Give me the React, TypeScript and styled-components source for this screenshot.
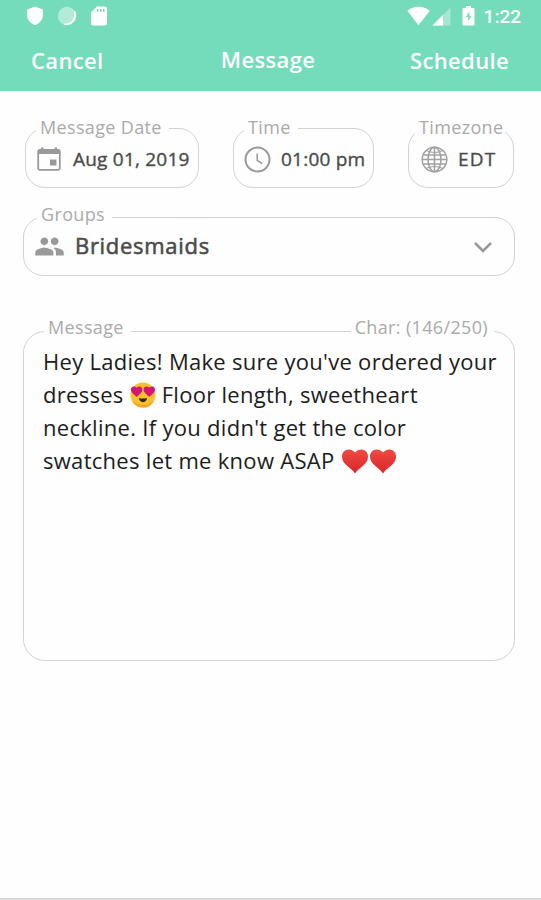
import * as React from 'react';
import styled, { createGlobalStyle } from 'styled-components';
import { MdPeople } from 'react-icons/md';

const GlobalStyle = createGlobalStyle`
  * {
    box-sizing: border-box;
  }
  body {
    margin: 0;
    background: #fefefe;
  }
`;

const StyledScreen = styled.div`
  display: flex;
  flex-direction: column;
  width: 541px;
  height: 900px;
  overflow: hidden;
  background: #fefefe;
  font-family: 'Open Sans', 'Noto Sans', sans-serif;
`;

const StyledHeader = styled.header`
  height: 91px;
  background: #74dcba;
  color: #ffffff;
`;

const StyledStatusBar = styled.div`
  display: flex;
  align-items: center;
  justify-content: space-between;
  height: 33px;
  padding: 0 20px 0 26px;
`;

const StyledStatusGroup = styled.div<{ $gap?: number }>`
  display: flex;
  align-items: center;
  gap: ${({ $gap }) => $gap || 0}px;
  height: 32px;
  margin-bottom: 1px;
`;

const StyledBattery = styled.span`
  display: flex;
  margin-left: 11px;
`;

const StyledClock = styled.span`
  margin-left: 9px;
  padding-top: 1px;
  font: 500 19px/33px Roboto, sans-serif;
`;

const StyledNavBar = styled.nav`
  display: grid;
  grid-template-columns: 1fr auto 1fr;
  padding: 0 32px 0 31px;
`;

const StyledNavItem = styled.span<{ $align?: string }>`
  font-size: 22px;
  font-weight: 600;
  line-height: 54px;
  letter-spacing: 0.35px;
  text-align: ${({ $align }) => $align || 'left'};
`;

const StyledNavTitle = styled(StyledNavItem)`
  margin-right: 4px;
  line-height: 52px;
`;

const StyledForm = styled.main`
  display: flex;
  flex-direction: column;
  flex-grow: 1;
  padding: 37px 26px 0 23px;
  border-bottom: 2px solid #d8d8d8;
`;

const StyledFieldRow = styled.div`
  display: flex;
  justify-content: space-between;
  margin: 0 1px 29px 2px;
`;

const StyledField = styled.section<{ $width?: number; $height?: number; $radius?: number }>`
  position: relative;
  display: flex;
  align-items: center;
  width: ${({ $width }) => ($width ? `${$width}px` : '100%')};
  height: ${({ $height }) => $height || 60}px;
  border: 1.5px solid #d2d2d2;
  border-radius: ${({ $radius }) => $radius || 20}px;
`;

const StyledLabel = styled.span<{ $left?: number; $right?: number; $top?: number; $padRight?: number }>`
  position: absolute;
  top: ${({ $top }) => $top || -15}px;
  ${({ $left }) => $left !== undefined && `left: ${$left}px;`}
  ${({ $right }) => $right !== undefined && `right: ${$right}px;`}
  padding: 0 ${({ $padRight }) => ($padRight === undefined ? 7 : $padRight)}px 0 4px;
  background: #fefefe;
  color: #aaaaaa;
  font-size: 18px;
  line-height: 26px;
  letter-spacing: 0.35px;
  white-space: nowrap;
`;

const StyledIcon = styled.span<{ $left: number; $gap: number }>`
  display: flex;
  flex-shrink: 0;
  margin: 0 ${({ $gap }) => $gap}px 0 ${({ $left }) => $left}px;
  padding-top: 2px;
  color: #999999;
`;

const StyledValue = styled.span<{ $spacing?: number }>`
  padding-top: 1px;
  color: #4a4a4a;
  font-size: 19px;
  line-height: 30px;
  letter-spacing: ${({ $spacing }) => $spacing || 0.22}px;
  white-space: nowrap;
  -webkit-text-stroke: 0.35px #4a4a4a;
`;

const StyledGroupValue = styled(StyledValue)`
  margin-bottom: 5px;
  font-size: 22px;
  -webkit-text-stroke-width: 0.55px;
`;

const StyledGroupField = styled(StyledField)`
  height: 59px;
  ${StyledIcon} {
    padding: 0 0 1px;
  }
`;

const StyledChevron = styled.svg`
  margin: 1px 21px 0 auto;
`;

const StyledMessageField = styled(StyledField)`
  flex-direction: column;
  align-items: flex-start;
  margin-top: 55px;
  padding: 13px 0 0 19px;
`;

const StyledMessageLine = styled.div`
  display: flex;
  align-items: center;
  height: 33px;
  color: #1c1c1c;
  font-size: 22px;
  line-height: 33px;
  letter-spacing: 0.29px;
  white-space: pre;
`;

const StyledEmoji = styled.span<{ $left?: number; $right?: number }>`
  display: flex;
  margin: 1px ${({ $right }) => $right || 0}px 0 ${({ $left }) => $left || 0}px;
`;

const ShieldIcon = () => (
  <svg width="18" height="20" viewBox="0 0 18 20">
    <path d="M9 .6 16.800 3.400V9.500c0 4.500-3.300 7.800-7.800 9.700C4.500 17.300 1.200 14 1.200 9.500V3.400Z" fill="#fff" />
  </svg>
);

const SyncIcon = () => (
  <svg width="20" height="20" viewBox="0 0 20 20">
    <circle cx="10" cy="10" r="9.200" fill="#fff" fillOpacity=".45" />
    <path d="M17.500 5A9 9 0 0 1 7.500 18.200C16 18.500 18.500 11 17.500 5Z" fill="#fff" stroke="#fff" />
  </svg>
);

const SdCardIcon = () => (
  <svg width="18" height="20" viewBox="0 0 18 20">
    <path d="M7 .5h8A2 2 0 0 1 17 2.500v15a2 2 0 0 1-2 2H3a2 2 0 0 1-2-2V6.500Z" fill="#fff" />
    <path d="M7.600 3v2.700M10.700 3v2.700M13.800 3v2.700" stroke="#74dcba" strokeWidth="1.500" />
  </svg>
);

const WifiIcon = () => (
  <svg width="24" height="20" viewBox="0 0 24 20">
    <path d="M12.500 19.200 1.300 4.700C4.500 2 8.500 .8 12.500 .8S20.500 2 23.700 4.700Z" fill="#fff" />
  </svg>
);

const SignalIcon = () => (
  <svg width="21" height="20" viewBox="0 0 21 20">
    <path d="M2.500 19.500 20.500 1.500v18Z" fill="#fff" fillOpacity=".35" />
    <path d="M2.500 19.500 13 9v10.500Z" fill="#fff" />
  </svg>
);

const BatteryIcon = () => (
  <svg width="13" height="20" viewBox="0 0 13 20">
    <path
      d="M4 0h5v2h2.200c.8 0 1.300.5 1.300 1.300v14.900c0 .8-.5 1.300-1.300 1.300H1.800c-.8 0-1.300-.5-1.300-1.300V3.300C.5 2.500 1 2 1.800 2H4Z"
      fill="#fff"
    />
    <path d="M7.300 5.500 3.800 11h2.500v4.500L9.300 10H7.300Z" fill="#74dcba" />
  </svg>
);

const CalendarIcon = () => (
  <svg width="26" height="26" viewBox="0 0 26 26" fill="none">
    <rect x="2.200" y="4" width="21.600" height="19.800" rx="1.500" stroke="#999" strokeWidth="1.800" />
    <path d="M2 4h22v4H2ZM5 1.500h2.500V4H5ZM18.500 1.500H21V4h-2.500ZM14 13.500h6.500v6H14Z" fill="#999" />
  </svg>
);

const TimeIcon = () => (
  <svg width="27" height="27" viewBox="0 0 27 27" fill="none" stroke="#999">
    <circle cx="13.500" cy="13.500" r="12" strokeWidth="2" />
    <path d="M13.200 7.500v6.800l5 3.200" strokeWidth="1.500" />
  </svg>
);

const GlobeIcon = () => (
  <svg width="27" height="27" viewBox="0 0 27 27" fill="none" stroke="#a0a0a0" strokeWidth="1.500">
    <circle cx="13.500" cy="13.500" r="12.300" />
    <ellipse cx="13.500" cy="13.500" rx="6.500" ry="12.300" />
    <path d="M1 13.500h25M13.500 1v25M2.500 9h22M2.500 18h22" />
    <path d="M5 4.500q8.500 4 17 0M5 22.500q8.500-4 17 0" strokeWidth="1.200" />
  </svg>
);

const HEART_PATH =
  'M14 25.500C12.500 23 9 20.500 5.500 17.300 2.500 14.500 1 12 1 8.500 1 4.500 3.800 1.500 7.500 1.500 10.500 1.500 13 3 14 4.500 15 3 17.500 1.500 20.500 1.500 24.200 1.500 27 4.500 27 8.500 27 12 25.500 14.500 22.500 17.300 19 20.500 15.500 23 14 25.500Z';

const HeartEyes = () => (
  <svg width="26" height="26" viewBox="0 0 26 26">
    <circle cx="13" cy="13" r="12.500" fill="#fbc12d" />
    <path d="M2 19a12.500 12.500 0 0 0 22 0Q13 27 2 19Z" fill="#f4a51f" />
    <path d="M9 16q4 1 8 0c0 5.500-8 5.500-8 0Z" fill="#302226" />
    <path d={HEART_PATH} fill="#d5147a" transform="translate(.5 3.800) scale(.44)" />
    <path d={HEART_PATH} fill="#d5147a" transform="translate(13.100 3.800) scale(.44)" />
  </svg>
);

const RedHeart = () => (
  <svg width="28" height="26" viewBox="0 0 28 26">
    <defs>
      <linearGradient id="heart" x2="0" y2="1">
        <stop stopColor="#ee4b43" />
        <stop offset="1" stopColor="#db2528" />
      </linearGradient>
    </defs>
    <path d={HEART_PATH} fill="url(#heart)" />
  </svg>
);

const StatusBar = () => (
  <StyledStatusBar>
    <StyledStatusGroup $gap={13}>
      <ShieldIcon />
      <SyncIcon />
      <SdCardIcon />
    </StyledStatusGroup>
    <StyledStatusGroup>
      <WifiIcon />
      <SignalIcon />
      <StyledBattery>
        <BatteryIcon />
      </StyledBattery>
      <StyledClock>1:22</StyledClock>
    </StyledStatusGroup>
  </StyledStatusBar>
);

const App = () => (
  <StyledScreen>
    <GlobalStyle />
    <StyledHeader>
      <StatusBar />
      <StyledNavBar>
        <StyledNavItem>Cancel</StyledNavItem>
        <StyledNavTitle>Message</StyledNavTitle>
        <StyledNavItem $align="right">Schedule</StyledNavItem>
      </StyledNavBar>
    </StyledHeader>
    <StyledForm>
      <StyledFieldRow>
        <StyledField $width={174}>
          <StyledLabel $left={10}>Message Date</StyledLabel>
          <StyledIcon $left={10} $gap={11}>
            <CalendarIcon />
          </StyledIcon>
          <StyledValue>Aug 01, 2019</StyledValue>
        </StyledField>
        <StyledField $width={141}>
          <StyledLabel $left={10}>Time</StyledLabel>
          <StyledIcon $left={10} $gap={10}>
            <TimeIcon />
          </StyledIcon>
          <StyledValue>01:00 pm</StyledValue>
        </StyledField>
        <StyledField $width={106}>
          <StyledLabel $left={6} $padRight={2}>
            Timezone
          </StyledLabel>
          <StyledIcon $left={12} $gap={10}>
            <GlobeIcon />
          </StyledIcon>
          <StyledValue $spacing={1.2}>EDT</StyledValue>
        </StyledField>
      </StyledFieldRow>
      <StyledGroupField>
        <StyledLabel $left={13} $top={-17}>
          Groups
        </StyledLabel>
        <StyledIcon $left={10} $gap={10}>
          <MdPeople size={31} />
        </StyledIcon>
        <StyledGroupValue $spacing={0.7}>Bridesmaids</StyledGroupValue>
        <StyledChevron width="20" height="13" viewBox="0 0 20 13">
          <path d="M2 2l8 8 8-8" fill="none" stroke="#999" strokeWidth="2.500" />
        </StyledChevron>
      </StyledGroupField>
      <StyledMessageField $height={330} $radius={22}>
        <StyledLabel $left={20} $top={-18}>
          Message
        </StyledLabel>
        <StyledLabel $right={20} $top={-18} $padRight={6}>
          Char: (146/250)
        </StyledLabel>
        <StyledMessageLine>Hey Ladies! Make sure you&apos;ve ordered your</StyledMessageLine>
        <StyledMessageLine>
          dresses
          <StyledEmoji $left={6} $right={6}>
            <HeartEyes />
          </StyledEmoji>
          Floor length, sweetheart
        </StyledMessageLine>
        <StyledMessageLine>neckline. If you didn&apos;t get the color</StyledMessageLine>
        <StyledMessageLine>
          swatches let me know ASAP
          <StyledEmoji $left={6}>
            <RedHeart />
            <RedHeart />
          </StyledEmoji>
        </StyledMessageLine>
      </StyledMessageField>
    </StyledForm>
  </StyledScreen>
);

export default App;
